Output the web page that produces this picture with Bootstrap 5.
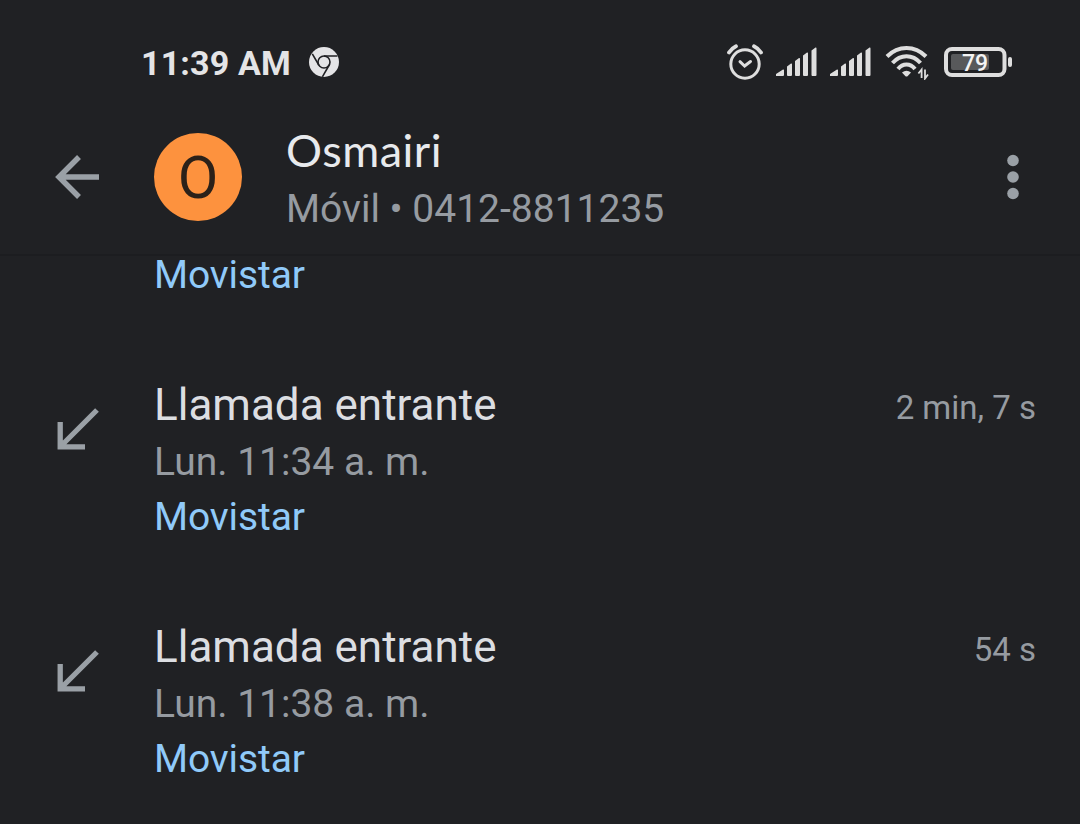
<!DOCTYPE html>
<html lang="es">
<head>
    <meta charset="UTF-8">
    <meta name="viewport" content="width=device-width, initial-scale=1.0">
    <title>Llamadas - Osmairi</title>
    <link rel="stylesheet" href="https://cdn.jsdelivr.net/npm/bootstrap@5.3.0/dist/css/bootstrap.min.css">
    <style>
        body {
            background-color: #202124;
            color: #969ba1;
            font-family: Roboto, sans-serif;
            overflow: hidden;
        }
        svg {
            display: block;
            flex: none;
        }
        .status-bar {
            height: 124px;
            padding: 0 67px 0 141px;
            color: #e4e4e6;
        }
        .clock {
            font-size: 34px;
            font-weight: 700;
            line-height: 40px;
            letter-spacing: .15px;
            margin-right: 18px;
            padding-top: 2px;
        }
        .sim-one {
            margin-left: 13px;
        }
        .sim-two {
            margin-left: 13px;
        }
        .wifi {
            margin-left: 14px;
        }
        .battery {
            margin-left: 15px;
        }
        .app-header {
            height: 132px;
            padding: 0 60px 24px 54px;
            border-bottom: 2px solid #1c1d20;
        }
        .avatar {
            width: 88px;
            height: 88px;
            margin-left: 54px;
            margin-right: 44px;
            padding-top: 1px;
            background-color: #fd923e;
            color: #2b2119;
            font-size: 59px;
            line-height: 88px;
        }
        .contact-text {
            padding-top: 4px;
        }
        .contact-name {
            font-family: Lato, sans-serif;
            font-size: 45px;
            line-height: 56px;
            letter-spacing: .5px;
            padding-bottom: 4px;
            color: #e8eaed;
        }
        .meta-line {
            font-size: 39px;
            line-height: 55px;
        }
        .carrier {
            color: #90caf9;
            letter-spacing: -.1px;
        }
        .call-log {
            padding: 0 44px 0 56px;
        }
        .first-entry {
            margin-top: -8px;
            padding-left: 98px;
        }
        .call-entry {
            margin-top: 72px;
        }
        .call-icon {
            width: 98px;
            padding-top: 32px;
        }
        .call-title {
            font-size: 44px;
            line-height: 60px;
            color: #dcdee2;
        }
        .duration {
            font-size: 33px;
            line-height: 66px;
        }
    </style>
</head>
<body>
    <div class="status-bar d-flex align-items-center">
        <div class="clock">11:39 AM</div>
        <svg width="30" height="30" viewBox="0 0 30 30">
            <circle cx="15" cy="15" r="15" fill="#e4e4e6"/>
            <g fill="none" stroke="#202124" stroke-width="1.6">
                <circle cx="15" cy="15" r="6"/>
                <path d="M15 9H28.5M9.8 18L3.3 6.8M20.2 18L13.4 29.8"/>
            </g>
        </svg>
        <div class="d-flex align-items-center ms-auto">
            <svg width="36" height="36" viewBox="0 0 36 36" fill="none" stroke="#dedede" stroke-width="3" stroke-linecap="round">
                <circle cx="18" cy="20" r="14.2"/>
                <path d="M13 17.7L17.6 22L23.5 17.5"/>
                <path d="M2 8.5Q4.5 4.5 9 2.3M34 8.5Q31.5 4.5 27 2.3" stroke-width="3.8"/>
            </svg>
            <svg class="sim-one" width="41" height="30" viewBox="0 0 41 30" fill="#dedede">
                <path id="bars" d="M0 29V27L7 22.5Q8 22 8 23.5V28Q8 29 7 29H0ZM11 19.5L15 16.6Q16 16 16 17.5V28Q16 29 15 29H12Q11 29 11 28ZM19 14L23 11Q24 10.5 24 12V28Q24 29 23 29H20Q19 29 19 28ZM27 8.5L31 5.6Q32 5 32 6.5V28Q32 29 31 29H28Q27 29 27 28ZM35.5 3.4L39.5 .5Q40.5 0 40.5 1.5V28Q40.5 29 39.5 29H36.5Q35.5 29 35.5 28Z"/>
            </svg>
            <svg class="sim-two" width="41" height="30" viewBox="0 0 41 30" fill="#dedede">
                <use href="#bars"/>
            </svg>
            <svg class="wifi" width="44" height="36" viewBox="0 0 44 36">
                <g fill="none" stroke="#dedede" stroke-width="4">
                    <path d="M2 12.5Q10.500 4 21.500 4T41 12.5"/>
                    <path d="M7.500 19Q13.500 12.300 21.500 12.300T35.500 19"/>
                    <path d="M13 25Q16.500 20.500 21.500 20.500T30 25"/>
                </g>
                <path d="M17 28.500Q21.500 25 26 28.500L22.500 32.200Q21.500 33 20.500 32.200Z" fill="#dedede"/>
                <path d="M36.600 34V25.500L33.400 29.500M40 25.500V34.500L43 30.500" fill="none" stroke="#dedede" stroke-width="1.8"/>
            </svg>
            <svg class="battery" width="69" height="30" viewBox="0 0 69 30">
                <rect x="2" y="2" width="58.500" height="26" rx="6" fill="none" stroke="#dedede" stroke-width="4"/>
                <rect x="7" y="7" width="38" height="16" rx="2" fill="#58595b"/>
                <rect x="64" y="10" width="4" height="10" rx="2" fill="#dedede"/>
                <text x="31" y="23.800" text-anchor="middle" font-size="23" font-weight="500" fill="#f4f4f4">79</text>
            </svg>
        </div>
    </div>

    <header class="app-header d-flex align-items-center">
        <svg width="46" height="44" viewBox="0 0 46 44" fill="none" stroke="#9aa0a6" stroke-width="5.500">
            <path d="M45 22H6M25 2L5 22L25 42"/>
        </svg>
        <div class="avatar rounded-circle text-center">O</div>
        <div class="contact-text">
            <div class="contact-name">Osmairi</div>
            <div class="meta-line">Móvil • 0412-8811235</div>
        </div>
        <svg class="ms-auto" width="14" height="46" viewBox="0 0 14 46" fill="#9aa0a6">
            <circle cx="7" cy="6.500" r="5.800"/>
            <circle cx="7" cy="23" r="5.800"/>
            <circle cx="7" cy="39.500" r="5.800"/>
        </svg>
    </header>

    <main class="call-log">
        <div class="first-entry">
            <div class="meta-line carrier">Movistar</div>
        </div>

        <div class="call-entry d-flex">
            <div class="call-icon">
                <svg width="44" height="44" viewBox="0 0 44 44" fill="none" stroke="#9aa0a6" stroke-width="5.300">
                    <path d="M41 3L5 39M4.200 15V39.800H29"/>
                </svg>
            </div>
            <div>
                <div class="call-title">Llamada entrante</div>
                <div class="meta-line">Lun. 11:34 a. m.</div>
                <div class="meta-line carrier">Movistar</div>
            </div>
            <div class="duration ms-auto">2 min, 7 s</div>
        </div>

        <div class="call-entry d-flex">
            <div class="call-icon">
                <svg width="44" height="44" viewBox="0 0 44 44" fill="none" stroke="#9aa0a6" stroke-width="5.300">
                    <path d="M41 3L5 39M4.200 15V39.800H29"/>
                </svg>
            </div>
            <div>
                <div class="call-title">Llamada entrante</div>
                <div class="meta-line">Lun. 11:38 a. m.</div>
                <div class="meta-line carrier">Movistar</div>
            </div>
            <div class="duration ms-auto">54 s</div>
        </div>
    </main>

    <script src="https://cdn.jsdelivr.net/npm/bootstrap@5.3.0/dist/js/bootstrap.bundle.min.js"></script>
</body>
</html>
